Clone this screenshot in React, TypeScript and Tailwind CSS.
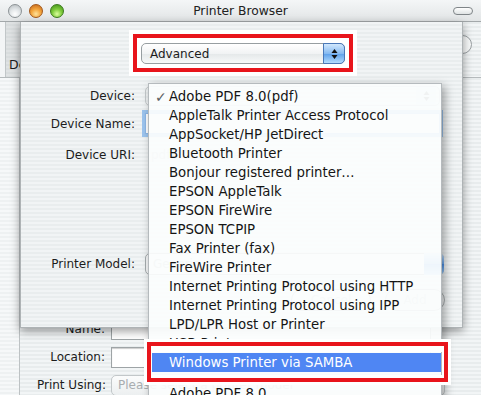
import React from "react";

const items = [
  "Adobe PDF 8.0(pdf)",
  "AppleTalk Printer Access Protocol",
  "AppSocket/HP JetDirect",
  "Bluetooth Printer",
  "Bonjour registered printer…",
  "EPSON AppleTalk",
  "EPSON FireWire",
  "EPSON TCPIP",
  "Fax Printer (fax)",
  "FireWire Printer",
  "Internet Printing Protocol using HTTP",
  "Internet Printing Protocol using IPP",
  "LPD/LPR Host or Printer",
  "USB Printer",
];

function Arrows() {
  return (
    <svg width="7" height="12" viewBox="0 0 7 12">
      <path d="M3.5 1 L6.5 5 L0.5 5 Z" fill="#111" />
      <path d="M3.5 11 L6.5 7 L0.5 7 Z" fill="#111" />
    </svg>
  );
}

export default function App() {
  return (
    <div className="w-[481px] h-[395px] overflow-hidden flex flex-col font-['DejaVu_Sans','Lucida_Grande',sans-serif] text-[#1c1c1c] bg-[image:repeating-linear-gradient(180deg,#f2f5f6_0px,#f2f5f6_2px,#e8eced_2px,#e8eced_4px)]">
      {/* Title bar */}
      <div className="h-[22px] shrink-0 grid grid-cols-[1fr_auto_1fr] items-center border-b border-[#a3a8aa] bg-[image:linear-gradient(180deg,#f4f6f7,#e2e5e6)] pt-[1px]">
        <div className="flex items-center gap-[7px] pl-[8px]">
          <div className="w-[14px] h-[14px] rounded-full border border-[#8d9396] bg-[image:radial-gradient(circle_at_50%_75%,#ffffff_0%,#e2e6e8_45%,#b3b9bc_100%)]" />
          <div className="w-[14px] h-[14px] rounded-full border border-[#a3581a] bg-[image:radial-gradient(circle_at_50%_75%,#ffe39a_0%,#f3a53c_45%,#c0621a_100%)]" />
          <div className="w-[14px] h-[14px] rounded-full border border-[#3b7a1c] bg-[image:radial-gradient(circle_at_50%_75%,#dcff9e_0%,#7ecb3c_45%,#3d8c17_100%)]" />
        </div>
        <div className="text-[12.3px] text-[#222] leading-none">Printer Browser</div>
        <div className="flex justify-end pr-[8px]">
          <div className="w-[20px] h-[8px] rounded-full border border-[#7f8588] bg-[image:linear-gradient(180deg,#ffffff,#dfe3e4)]" />
        </div>
      </div>

      {/* Body */}
      <div className="relative flex-1 flex flex-col">
        {/* header row of the browser window */}
        <div className="h-[56px] shrink-0 flex border-b border-[#b5babc]">
          <div className="w-[6px] border-r border-[#c1c6c8] bg-[#f3f5f6]" />
          <div className="w-[70px] flex items-end pl-[3px] pb-[2px] text-[12.5px] bg-[image:repeating-linear-gradient(180deg,#dfe2e3_0px,#dfe2e3_2px,#d8dcdd_2px,#d8dcdd_4px)]">
            Device
          </div>
          <div className="flex-1 flex justify-end items-start pt-[13px] pr-[9px]">
            <div className="w-[19px] h-[19px] rounded-full border border-[#9aa0a3] bg-[#f7f9f9]" />
          </div>
        </div>
        {/* lower part */}
        <div className="flex-1 flex">
          <div className="w-[20px] border-r border-[#bdc2c4] bg-[image:repeating-linear-gradient(180deg,#f6f8f9_0px,#f6f8f9_2px,#eef1f2_2px,#eef1f2_4px)]" />
          <div className="flex-1 flex flex-col pt-[237px] text-[12px]">
            <div className="h-[28px] flex items-center gap-[6px]">
              <div className="w-[85px] text-right">Name:</div>
              <div className="w-[320px] h-[21px] bg-white border border-[#9ea4a6]" />
            </div>
            <div className="h-[28px] flex items-center gap-[6px]">
              <div className="w-[85px] text-right">Location:</div>
              <div className="w-[320px] h-[21px] bg-white border border-[#9ea4a6] shadow-[inset_0_1px_1px_rgba(0,0,0,0.2)]" />
            </div>
            <div className="h-[28px] flex items-center gap-[5px]">
              <div className="w-[86px] text-right">Print Using:</div>
              <div className="w-[334px] h-[21px] flex items-center rounded-[5px] border border-[#c2c7c9] bg-[image:linear-gradient(180deg,#fbfcfc,#eceff0)] text-[#a8adb0] pl-[6px]">
                Please select a printer model
              </div>
            </div>
          </div>
        </div>

        {/* Sheet */}
        <div className="absolute left-[20px] top-0 w-[443px] h-[306px] flex flex-col pt-[12px] border-x border-b border-[#aeb3b5] shadow-[0_3px_9px_rgba(0,0,0,0.4)] text-[12px] bg-[image:repeating-linear-gradient(180deg,#f1f4f5_0px,#f1f4f5_2px,#e9edee_2px,#e9edee_4px)]">
          <div className="ml-[112px] w-[220px] h-[38px] border-[4px] border-[#e8141b] bg-white pl-[4px] pt-[5px] pr-[2px] pb-[4px] shadow-[0_0_0_4px_#ffffff]">
            <div className="w-[204px] h-[21px] flex items-center rounded-[5px] border border-[#979ea1] bg-[image:linear-gradient(180deg,#ffffff,#f1f3f4_50%,#e4e8e9_51%,#f7f9f9)]">
              <span className="pl-[8px]">Advanced</span>
              <div className="ml-auto h-[21px] w-[22px] -mr-px -my-px rounded-r-[5px] border border-[#4a78b8] flex items-center justify-center bg-[image:linear-gradient(180deg,#d2e8fd,#86baf1_50%,#5c9fea_51%,#b3dcfd)]">
                <Arrows />
              </div>
            </div>
          </div>

          <div className="mt-[14px] h-[20px] flex items-center gap-[10px]">
            <div className="w-[114px] text-right">Device:</div>
            <div className="w-[295px] h-[20px] rounded-[5px] border border-[#c4c9cb] flex items-center justify-end pr-[3px]">
              <div className="w-[20px] h-[18px] rounded-r-[4px] bg-[#dce8f2] flex items-center justify-center opacity-60">
                <Arrows />
              </div>
            </div>
          </div>
          <div className="mt-[7px] h-[21px] flex items-center gap-[10px]">
            <div className="w-[114px] text-right">Device Name:</div>
            <div className="w-[295px] h-[21px] bg-white border border-[#8db7e6] shadow-[0_0_0_3px_#9cc4ee]" />
          </div>
          <div className="mt-[11px] h-[20px] flex items-center gap-[10px]">
            <div className="w-[114px] text-right">Device URI:</div>
            <div className="text-[#c4c8ca] pl-[6px]">pdf8.0://distiller/</div>
          </div>
          <div className="mt-[88px] h-[22px] flex items-center gap-[10px]">
            <div className="w-[114px] text-right">Printer Model:</div>
            <div className="w-[299px] h-[22px] flex items-center rounded-[5px] border border-[#a4aaac] bg-[#f3f5f6] text-[#b0b5b7]">
              <span className="pl-[7px]">Generic</span>
              <div className="ml-auto h-[22px] w-[20px] -mr-px rounded-r-[5px] bg-[image:linear-gradient(180deg,#cfe6fd,#6aa8ee_50%,#4a8fe6_51%,#a8d4fb)]" />
            </div>
          </div>
          <div className="mt-[14px] h-[22px] flex items-center justify-end gap-[14px] pr-[17px]">
            <div className="w-[80px] h-[22px] rounded-full border border-[#a9aeb0] bg-[#f4f6f7] flex items-center justify-center text-[#c0c4c6]">Cancel</div>
            <div className="w-[60px] h-[22px] rounded-full border border-[#a9aeb0] bg-[#eef1f2] flex items-center justify-center text-[#c0c4c6]">Add</div>
          </div>
        </div>

        {/* Pop-up menu */}
        <div className="absolute left-[148px] top-[61px] w-[294px] h-[340px] pt-[3px] border border-[#b5babd] bg-[#fbfdfd]/[0.93] shadow-[3px_3px_9px_rgba(0,0,0,0.35)] text-[13.3px] text-[#151515] flex flex-col">
          {items.map((t, i) => (
            <div key={t} className="h-[19px] shrink-0 flex items-center">
              <div className="w-[20px] pl-[6px] text-[14px] leading-none font-bold text-[#5a5f62]">{i === 0 ? "✓" : ""}</div>
              <div className="whitespace-nowrap">{t}</div>
            </div>
          ))}
          <div className="h-[19px] shrink-0 flex items-center bg-[#4f86f3] text-white">
            <div className="w-[20px]" />
            <div className="whitespace-nowrap">Windows Printer via SAMBA</div>
          </div>
          <div className="h-[12px] shrink-0 flex items-center">
            <div className="w-full h-px bg-[#d6dadc]" />
          </div>
          <div className="h-[19px] shrink-0 flex items-center">
            <div className="w-[20px]" />
            <div className="whitespace-nowrap">Adobe PDF 8.0</div>
          </div>
        </div>

        {/* Red highlight box around the selected menu item */}
        <div className="absolute left-[147px] top-[320px] w-[301px] h-[40px] border-[4px] border-[#e8141b] shadow-[0_0_0_3px_#ffffff]">
          <div className="w-full h-full border-t-[6px] border-l-[1px] border-r-[2px] border-b-[3px] border-white" />
        </div>
      </div>
    </div>
  );
}
